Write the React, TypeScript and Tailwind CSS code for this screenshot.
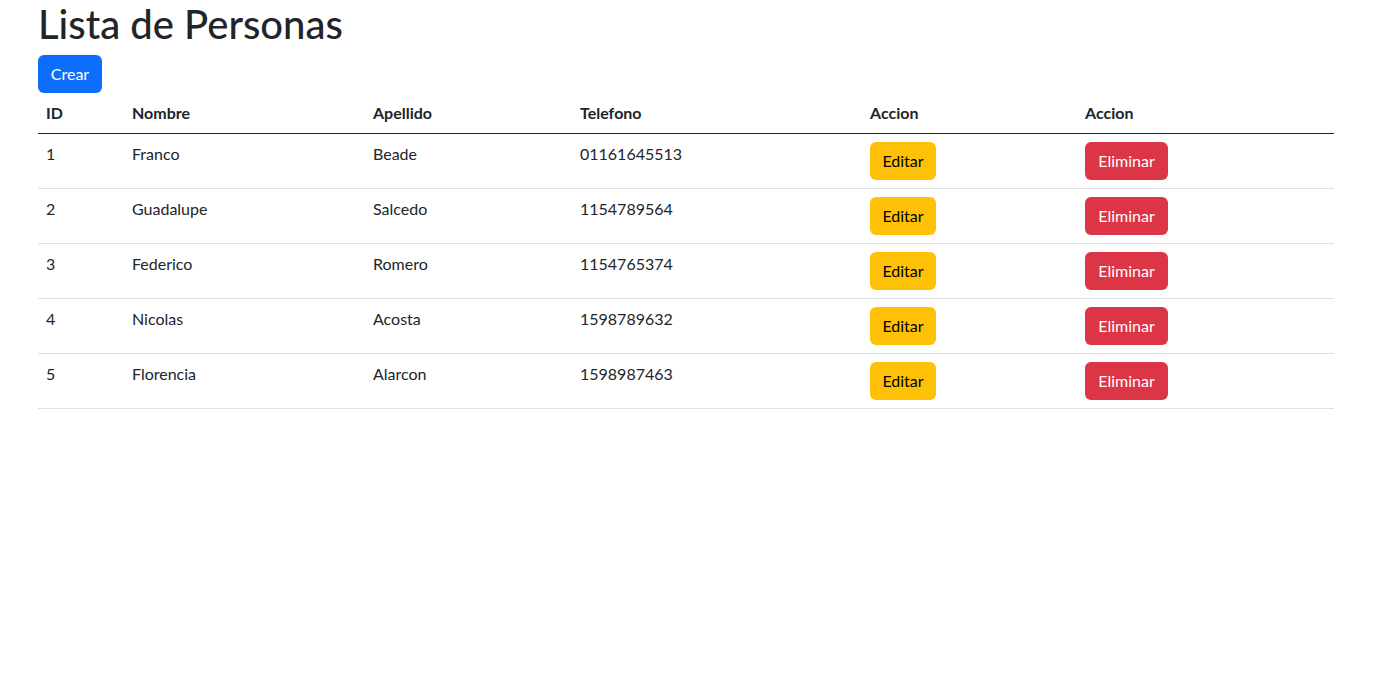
import React from 'react';

interface Persona {
  id: number;
  nombre: string;
  apellido: string;
  telefono: string;
}

const personas: Persona[] = [
  { id: 1, nombre: 'Franco', apellido: 'Beade', telefono: '01161645513' },
  { id: 2, nombre: 'Guadalupe', apellido: 'Salcedo', telefono: '1154789564' },
  { id: 3, nombre: 'Federico', apellido: 'Romero', telefono: '1154765374' },
  { id: 4, nombre: 'Nicolas', apellido: 'Acosta', telefono: '1598789632' },
  { id: 5, nombre: 'Florencia', apellido: 'Alarcon', telefono: '1598987463' },
];

const headers = ['ID', 'Nombre', 'Apellido', 'Telefono', 'Accion', 'Accion'];

const App = () => {
  return (
    <div className="min-h-screen bg-white text-[#212529] font-['Lato','Noto_Sans',sans-serif] text-base leading-6">
      <div className="ml-[38px] w-[1296px]">
        <h1 className="text-[40px] leading-[48px] font-medium">Lista de Personas</h1>
        <button className="mt-[7px] h-[38px] w-[64px] rounded-md bg-[#0d6efd] text-white">
          Crear
        </button>
        <table className="w-full table-fixed border-collapse">
          <colgroup>
            <col className="w-[86px]" />
            <col className="w-[241px]" />
            <col className="w-[207px]" />
            <col className="w-[290px]" />
            <col className="w-[215px]" />
            <col className="w-[257px]" />
          </colgroup>
          <thead>
            <tr className="border-b border-[#212529]">
              {headers.map((h, i) => (
                <th key={i} className="p-2 text-left font-bold">
                  {h}
                </th>
              ))}
            </tr>
          </thead>
          <tbody>
            {personas.map((p) => (
              <tr key={p.id} className="border-b border-[#dee2e6]">
                <td className="p-2 align-top">{p.id}</td>
                <td className="p-2 align-top">{p.nombre}</td>
                <td className="p-2 align-top">{p.apellido}</td>
                <td className="p-2 align-top">{p.telefono}</td>
                <td className="p-2 align-top">
                  <button className="h-[38px] w-[66px] rounded-md bg-[#ffc107] text-black">
                    Editar
                  </button>
                </td>
                <td className="p-2 align-top">
                  <button className="h-[38px] w-[83px] rounded-md bg-[#dc3545] text-white">
                    Eliminar
                  </button>
                </td>
              </tr>
            ))}
          </tbody>
        </table>
      </div>
    </div>
  );
};

export default App;
